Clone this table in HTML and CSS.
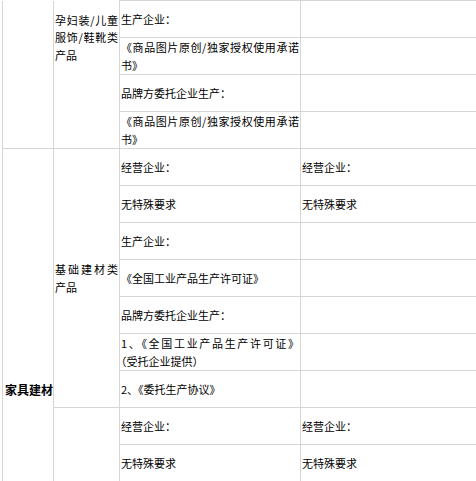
FILE: index.html
```html
<!DOCTYPE html>
<html lang="zh-CN">
<head>
<meta charset="utf-8">
<title>类目资质要求</title>
<link rel="stylesheet" href="styles.css">
</head>
<body>
<table class="qual">
  <colgroup>
    <col class="w1">
    <col class="w2">
    <col class="w3">
    <col class="w4">
  </colgroup>
  <tbody>
    <tr>
      <td class="cat top-open" rowspan="4"></td>
      <td class="sub top-open first-sub" rowspan="4">孕妇装/儿童服饰/鞋靴类产品</td>
      <td>生产企业：</td>
      <td class="last"></td>
    </tr>
    <tr>
      <td>《商品图片原创/独家授权使用承诺书》</td>
      <td class="last"></td>
    </tr>
    <tr>
      <td>品牌方委托企业生产：</td>
      <td class="last"></td>
    </tr>
    <tr>
      <td>《商品图片原创/独家授权使用承诺书》</td>
      <td class="last"></td>
    </tr>
    <tr>
      <td class="cat cat-name" rowspan="9">家具建材</td>
      <td class="sub" rowspan="7">基础建材类产品</td>
      <td>经营企业：</td>
      <td class="last">经营企业：</td>
    </tr>
    <tr>
      <td>无特殊要求</td>
      <td class="last">无特殊要求</td>
    </tr>
    <tr>
      <td>生产企业：</td>
      <td class="last"></td>
    </tr>
    <tr>
      <td>《全国工业产品生产许可证》</td>
      <td class="last"></td>
    </tr>
    <tr>
      <td>品牌方委托企业生产：</td>
      <td class="last"></td>
    </tr>
    <tr>
      <td>1、《全国工业产品生产许可证》<span class="keep">（受托企业提供）</span></td>
      <td class="last"></td>
    </tr>
    <tr>
      <td>2、《委托生产协议》</td>
      <td class="last"></td>
    </tr>
    <tr>
      <td class="sub" rowspan="2"></td>
      <td>经营企业：</td>
      <td class="last">经营企业：</td>
    </tr>
    <tr>
      <td>无特殊要求</td>
      <td class="last">无特殊要求</td>
    </tr>
  </tbody>
</table>
</body>
</html>
```

FILE: styles.css
```css
html, body {
  margin: 0;
  padding: 0;
  background: #ffffff;
  overflow: hidden;
}

body {
  font-family: "Noto Sans CJK SC", "Noto Sans", sans-serif;
  font-size: 11px;
  line-height: 17.5px;
  color: #000000;
}

.qual {
  border-collapse: collapse;
  table-layout: fixed;
  width: 474px;
  margin-left: 2px;
}

.w1 { width: 51px; }
.w2 { width: 66px; }
.w3 { width: 181px; }
.w4 { width: 176px; }

.qual tr {
  height: 37px;
}

.qual td {
  border: 1px solid #d6d6d6;
  padding: 1px 1px 0 1px;
  vertical-align: middle;
  text-align: justify;
  word-break: normal;
}

.qual td.last {
  border-right-style: hidden;
}

.qual td.top-open {
  border-top-style: hidden;
}

.qual td.first-sub {
  vertical-align: top;
  padding-top: 11px;
}

.qual td.cat-name {
  vertical-align: top;
  padding: 232px 0 0 2px;
  font-size: 12px;
  font-weight: bold;
  text-align: left;
  white-space: nowrap;
}

.keep {
  white-space: nowrap;
}
```
